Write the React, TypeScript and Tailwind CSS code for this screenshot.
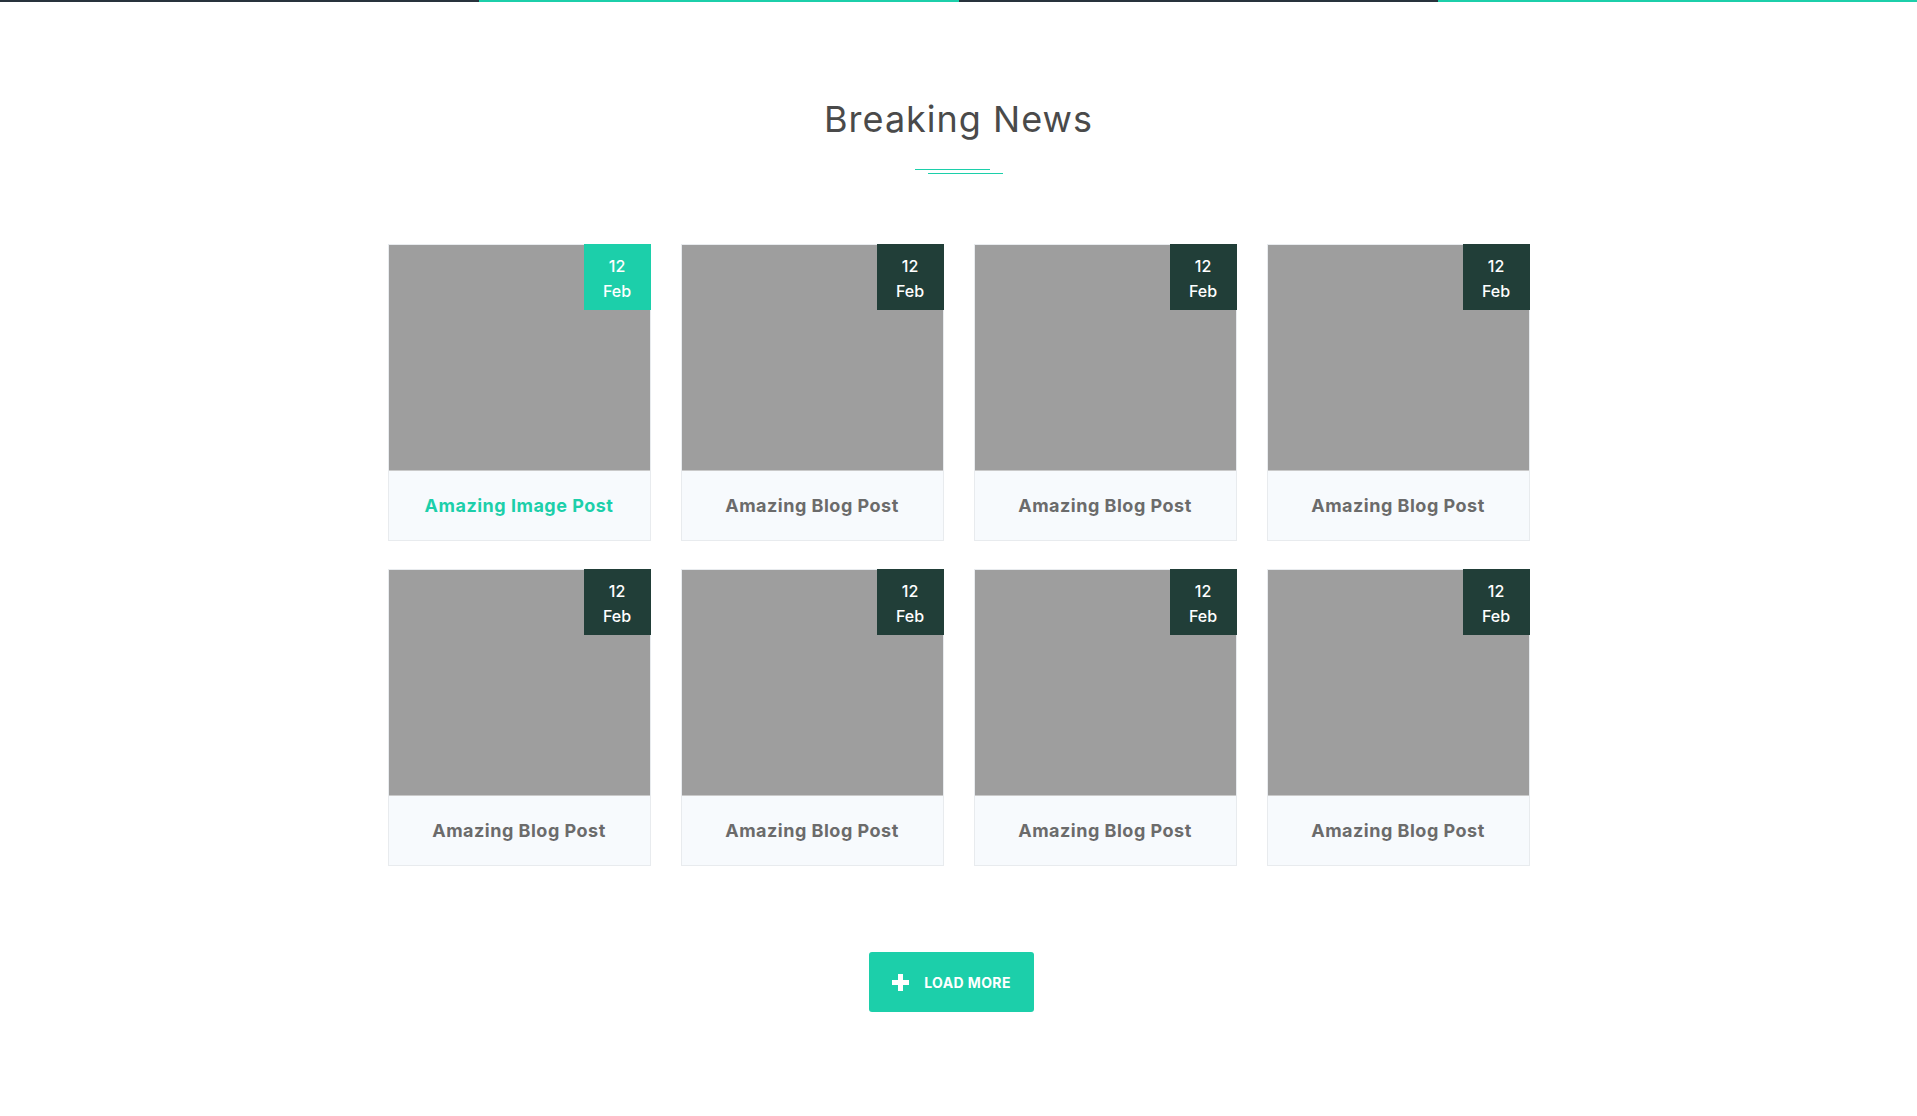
import React from 'react';

type Post = { title: string; day: string; month: string; active?: boolean };

const posts: Post[] = [
  { title: 'Amazing Image Post', day: '12', month: 'Feb', active: true },
  { title: 'Amazing Blog Post', day: '12', month: 'Feb' },
  { title: 'Amazing Blog Post', day: '12', month: 'Feb' },
  { title: 'Amazing Blog Post', day: '12', month: 'Feb' },
  { title: 'Amazing Blog Post', day: '12', month: 'Feb' },
  { title: 'Amazing Blog Post', day: '12', month: 'Feb' },
  { title: 'Amazing Blog Post', day: '12', month: 'Feb' },
  { title: 'Amazing Blog Post', day: '12', month: 'Feb' },
];

const PostCard: React.FC<{ post: Post }> = ({ post }) => (
  <div className="relative border border-[#e8ebee] bg-[#f7fafd] flex flex-col">
    <div className="h-[226px] bg-[#9e9e9e] border-b border-[#c9c9c9]" />
    <div
      className={`absolute top-[-1px] right-[-1px] w-[67px] h-[66px] pt-[3px] flex flex-col items-center justify-center text-white text-[16px] font-medium leading-[25px] ${
        post.active ? 'bg-[#1ccfaa]' : 'bg-[#213e38]'
      }`}
    >
      <span>{post.day}</span>
      <span>{post.month}</span>
    </div>
    <div className="h-[69px] flex items-center justify-center">
      <h3
        className={`text-[18px] font-bold tracking-[0.5px] ${post.active ? 'text-[#1ccfaa]' : 'text-[#6b6b6b]'}`}
      >
        {post.title}
      </h3>
    </div>
  </div>
);

const App: React.FC = () => (
  <div className="min-h-screen bg-white font-['Inter',sans-serif]">
    <div className="flex h-[2px]">
      <div className="flex-1 bg-[#28323c]" />
      <div className="flex-1 bg-[#1ccfaa]" />
      <div className="flex-1 bg-[#28323c]" />
      <div className="flex-1 bg-[#1ccfaa]" />
    </div>

    <section className="mx-auto w-[1142px] pt-[95px] pb-[80px] flex flex-col items-center">
      <h2 className="text-[36px] leading-[44px] font-normal tracking-[1px] text-[#4a4a4a]">Breaking News</h2>
      <div className="mt-[28px] w-[88px] flex flex-col gap-[3px]">
        <div className="h-px w-[75px] bg-[#1ccfaa]" />
        <div className="h-px w-[75px] ml-[13px] bg-[#1ccfaa]" />
      </div>

      <div className="mt-[70px] w-full grid grid-cols-4 gap-x-[30px] gap-y-[28px]">
        {posts.map((post, index) => (
          <PostCard key={index} post={post} />
        ))}
      </div>

      <button className="mt-[86px] mr-[14px] h-[60px] w-[165px] rounded-[3px] bg-[#1ccfaa] flex items-center justify-center gap-[15px] text-white text-[14px] font-bold tracking-[0.4px]">
        <svg width="17" height="17" viewBox="0 0 17 17">
          <path d="M8.5 0v17M0 8.5h17" stroke="white" strokeWidth="5" />
        </svg>
        <span>LOAD MORE</span>
      </button>
    </section>
  </div>
);

export default App;
